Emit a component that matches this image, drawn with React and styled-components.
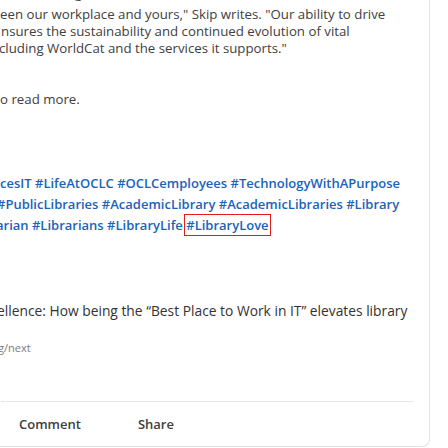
import React from 'react'
import styled, { createGlobalStyle } from 'styled-components'

const Global = createGlobalStyle`
  html, body {
    margin: 0;
    padding: 0;
    background: #ffffff;
    overflow: hidden;
  }
  body {
    width: 448px;
    height: 448px;
    font-family: "Open Sans", "Noto Sans", sans-serif;
    -webkit-font-smoothing: antialiased;
  }
`

const Card = styled.article`
  margin: -8px 18px 0 -40px;
  padding: 0 16px 0 40px;
  border: 1px solid #e3e3e3;
  border-top: none;
  border-radius: 0 0 8px 8px;
  background: #fff;
  overflow: hidden;
`

const Body = styled.div`
  font-size: 13.25px;
  line-height: 17px;
  color: #404040;
`

const Line = styled.div`
  white-space: nowrap;
  margin-left: ${p => p.$inset || 0}px;
  margin-top: ${p => p.$gap || 0}px;
`

const Tags = styled.div`
  margin-top: 65px;
  font-size: 13px;
  line-height: 21px;
  font-weight: 600;
  color: #1b63b8;
`

const Tag = styled.a`
  color: inherit;
  text-decoration: none;
  outline: ${p => (p.$focused ? '1px solid #e31b1b' : 'none')};
  outline-offset: 1px;
`

const Title = styled.div`
  margin-top: 65px;
  font-size: 13.8px;
  line-height: 20px;
  color: #333;
  white-space: nowrap;
  margin-left: -4px;
`

const Source = styled.div`
  margin-top: 19px;
  font-size: 11px;
  line-height: 16px;
  color: #7a7a7a;
  white-space: nowrap;
  margin-left: -3px;
`

const Rule = styled.hr`
  margin: 45px 0 0;
  border: none;
  border-top: 1px solid #e6e6e6;
`

const Actions = styled.div`
  display: flex;
  align-items: center;
  height: 44px;
  padding-left: 18px;
  gap: 57px;
`

const Action = styled.button`
  border: none;
  background: none;
  padding: 0;
  font-family: inherit;
  font-size: 13px;
  font-weight: 600;
  color: #404040;
  cursor: pointer;
`

const tags1 = ['#ServicesIT', '#LifeAtOCLC', '#OCLCemployees', '#TechnologyWithAPurpose']
const tags2 = ['#PublicLibraries', '#AcademicLibrary', '#AcademicLibraries', '#Library']
const tags3 = ['#Librarian', '#Librarians', '#LibraryLife', '#LibraryLove']

function TagLine({ items, inset, skip }) {
  return (
    <Line $inset={inset}>
      {items.map((t, i) => (
        <React.Fragment key={t}>
          {i > 0 && ' '}
          <Tag href="#" $focused={t === '#LibraryLove'}>
            {i === 0 ? t.slice(skip) : t}
          </Tag>
        </React.Fragment>
      ))}
    </Line>
  )
}

export default function App() {
  return (
    <>
      <Global />
      <Card>
        <Body>
          <Line $inset={-2} $gap={-7}>and the bridge between</Line>
          <Line $inset={-1} $gap={4}>een our workplace and yours," Skip writes. "Our ability to drive</Line>
          <Line $inset={0}>nsures the sustainability and continued evolution of vital</Line>
          <Line $inset={-2}>cluding WorldCat and the services it supports."</Line>
          <Line $inset={-1} $gap={34}>o read more.</Line>
        </Body>
        <Tags>
          <TagLine items={tags1} inset={-1} skip={6} />
          <TagLine items={tags2} inset={-4} skip={0} />
          <TagLine items={tags3} inset={-5} skip={5} />
        </Tags>
        <Title>ellence: How being the “Best Place to Work in IT” elevates library</Title>
        <Source>g/next</Source>
        <Rule />
        <Actions>
          <Action>Comment</Action>
          <Action>Share</Action>
        </Actions>
      </Card>
    </>
  )
}
